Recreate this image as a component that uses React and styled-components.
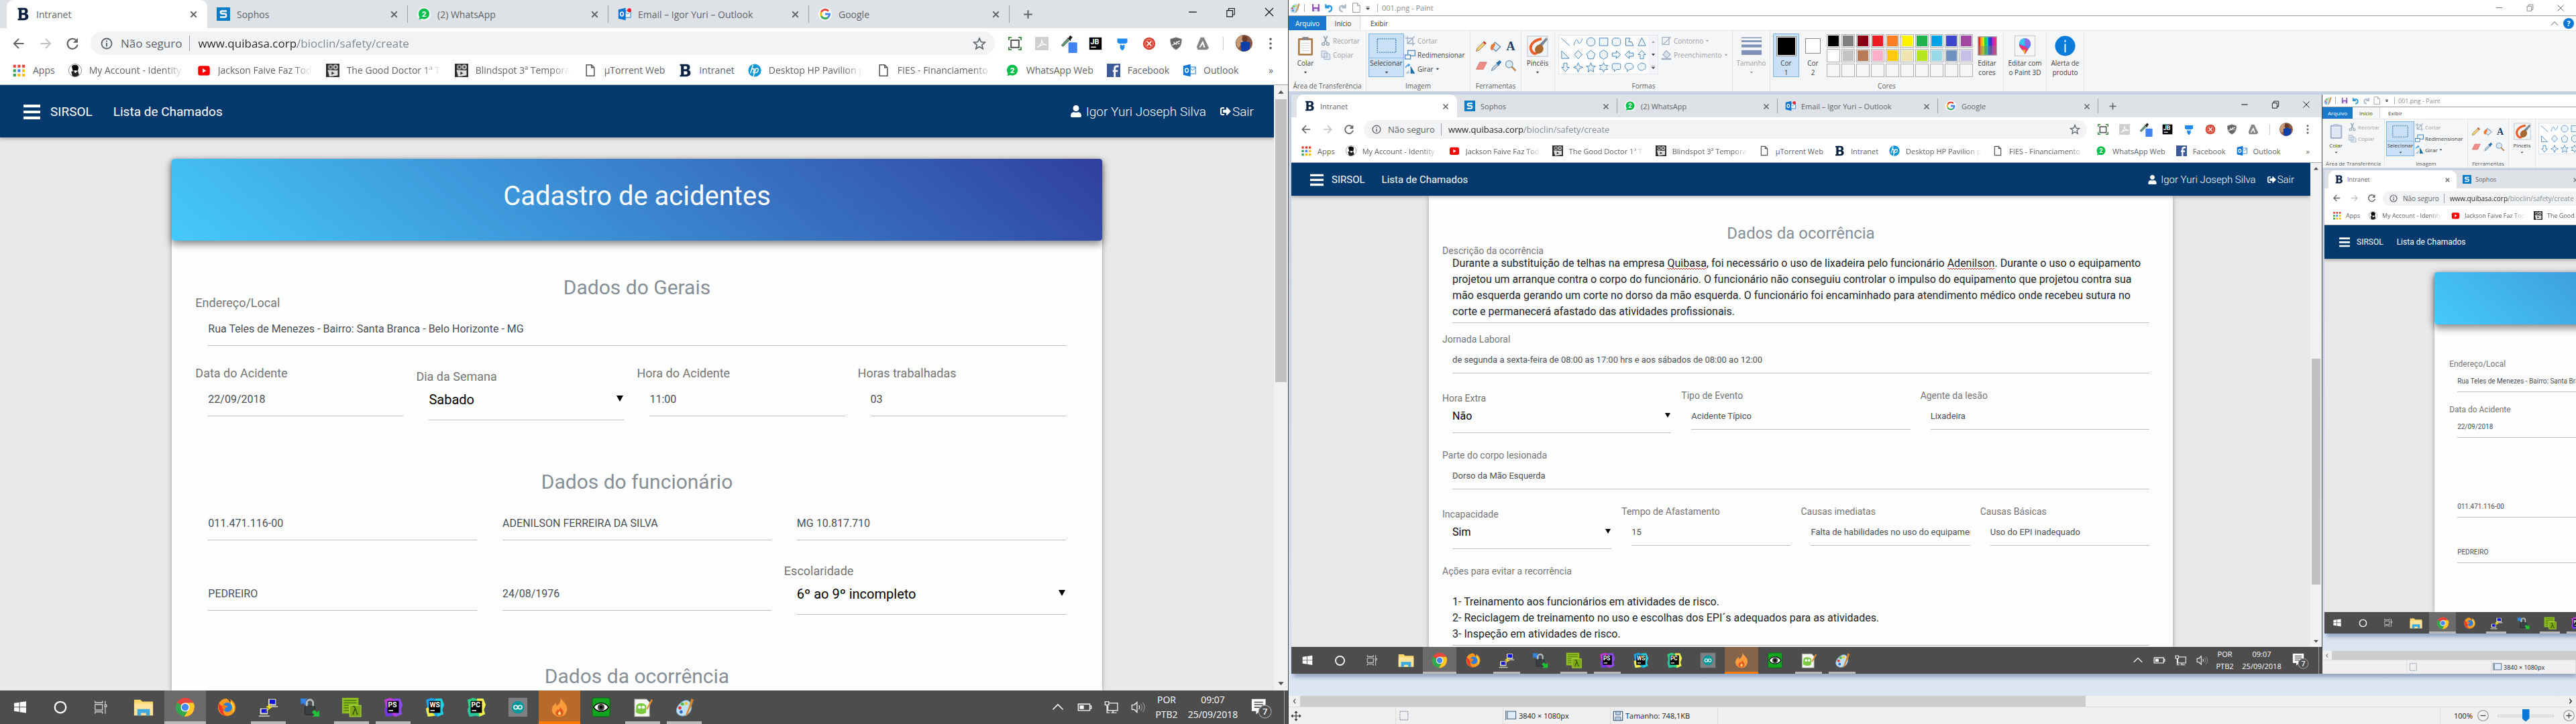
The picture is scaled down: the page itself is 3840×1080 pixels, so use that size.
import React, { useId } from "react";
import styled, { createGlobalStyle, css, ThemeProvider } from "styled-components";
import { FaUser, FaSignOutAlt } from "react-icons/fa";

/* Every length is a base size multiplied by the zoom of the surface it sits on. */
const px = (n) => ({ theme }) => `${Math.max(1, Math.round(n * theme.k))}px`;
/* Sizes that do not scale evenly are listed for the full, reduced and smallest surface. */
const bySurface = (...values) => ({ theme }) => values[theme.level];

const UI = `"Open Sans", "Noto Sans", sans-serif`;
const PAGE = `Roboto, sans-serif`;

const GlobalStyle = createGlobalStyle`
  * { box-sizing: border-box; }
  body { margin: 0; overflow: hidden; font-family: ${UI}; }
  button, input, select, textarea { font: inherit; color: inherit; margin: 0; padding: 0; border: 0; background: none; outline: 0; border-radius: 0; }
  a { color: inherit; text-decoration: none; }
  svg { display: block; flex: none; }
`;

/* ------------------------------------------------------------------ icons */

const Svg = styled.svg`
  width: ${({ $w, theme }) => Math.round($w * theme.k)}px;
  height: ${({ $h, theme }) => Math.round($h * theme.k)}px;
`;

const ideTile = (a, b, c, label) => (
  <>
    <path d="M2 4l9-3 6 2 10-1 4 10-3 8 2 7-9 4-8-2-8 2-3-9 2-6z" fill={a} />
    <path d="M17 2l10 0 4 10-3 8 2 7-9 4z" fill={b} />
    <path d="M2 18l3-2 12 13-4 1-8 1z" fill={c} />
    <rect x="7" y="6" width="18" height="19" fill="#000" />
    <text x="8" y="16.500" fontSize="11" fontWeight="700" fontFamily="Roboto, sans-serif" fill="#fff">{label}</text>
    <rect x="9" y="20.500" width="7" height="1.600" fill="#fff" />
  </>
);

const stroke = (d, extra = {}) => <path d={d} fill="none" stroke="currentColor" strokeWidth="2" {...extra} />;

const drawings = {
  bold: <path fillRule="evenodd" d="M3 1h11c5 0 7 2 7 6 0 2-1 4-3 4.500 3 .5 4 2.500 4 5 0 4-3 6.500-8 6.500H3v-3h2V4H3zM10 4.500V10h3c2 0 3-1 3-3s-1-2.500-3-2.500zM10 13.500v6h3.500c2 0 3-1 3-3s-1-3-3-3z" fill="#0a2142" />,
  sophos: <><rect width="24" height="24" fill="#0a7bc6" /><path d="M18 6.500H9.500q-2.500 0-2.500 2.300T9.500 11.500h5q2.500 0 2.500 3t-2.500 3H6" fill="none" stroke="#fff" strokeWidth="3" /></>,
  whats: <><circle cx="12" cy="12" r="12" fill="#fff" /><circle cx="12" cy="11.500" r="9.800" fill="#0bbf4c" /><path d="M3 22l1.500-6 5 4z" fill="#0bbf4c" /><text x="12" y="16.500" textAnchor="middle" fontSize="14" fontWeight="700" fontFamily="Roboto, sans-serif" fill="#fff">2</text></>,
  outlook: <><rect x="12" y="6" width="11" height="12" fill="#fff" stroke="#1a79d0" strokeWidth="1.200" /><path d="M12 7l5.500 5L23 7" fill="none" stroke="#1a79d0" strokeWidth="1.200" /><path d="M1 4l13-3v22L1 20z" fill="#0f76d4" /><ellipse cx="7.300" cy="12" rx="2.800" ry="3.500" fill="none" stroke="#fff" strokeWidth="1.800" /></>,
  outlookNew: <><rect x="12" y="6" width="11" height="12" fill="#fff" stroke="#1a79d0" strokeWidth="1.200" /><path d="M12 7l5.500 5L23 7" fill="none" stroke="#1a79d0" strokeWidth="1.200" /><path d="M1 4l13-3v22L1 20z" fill="#0f76d4" /><ellipse cx="7.300" cy="12" rx="2.800" ry="3.500" fill="none" stroke="#fff" strokeWidth="1.800" /><circle cx="20.500" cy="5" r="3.500" fill="#f2202c" /></>,
  google: <><circle cx="12" cy="12" r="12" fill="#fff" /><path d="M18 6.500A8 8 0 0 0 5 8.400" fill="none" stroke="#ea4335" strokeWidth="3.400" /><path d="M5 8.400a8 8 0 0 0 0 7.200" fill="none" stroke="#fbbc05" strokeWidth="3.400" /><path d="M5 15.600a8 8 0 0 0 12.200 2.500" fill="none" stroke="#34a853" strokeWidth="3.400" /><path d="M12 12h8a8 8 0 0 1-2.800 6.100" fill="none" stroke="#4285f4" strokeWidth="3.400" /></>,
  cross: stroke("M6 6l12 12M18 6L6 18", { strokeWidth: 2.6 }),
  plus: stroke("M12 4v16M4 12h16", { strokeWidth: 2.6 }),
  back: stroke("M21 12H4M12 3.500L3.500 12l8.500 8.500", { strokeWidth: 2.4 }),
  forward: stroke("M3 12h17M12 3.500l8.500 8.500-8.500 8.500", { strokeWidth: 2.4 }),
  reload: <><path d="M19 6.500A9 9 0 1 0 21 14" fill="none" stroke="currentColor" strokeWidth="2.600" /><path d="M21.500 2v8.500H13z" fill="currentColor" /></>,
  info: <><circle cx="12" cy="12" r="10" fill="none" stroke="currentColor" strokeWidth="2.400" /><path d="M12 10.500V18M12 6v2.500" stroke="currentColor" strokeWidth="2.600" /></>,
  star: stroke("M12 2.500l2.800 6.600 7.200.6-5.500 4.700 1.700 7-6.200-3.800-6.200 3.800 1.700-7L2 9.700l7.200-.6z"),
  capture: <><rect x="5" y="6" width="14" height="13" fill="none" stroke="#555" strokeWidth="2.400" /><path d="M1 6V1h5M18 1h5v5M23 18v5h-5M6 23H1v-5" fill="none" stroke="#3b8a3e" strokeWidth="2.400" /></>,
  pdf: <><rect width="24" height="24" fill="#cfcfcf" /><path d="M4 19c5-3 8-9 8-14 0 6 4 10 9 9-6-1-12 1-17 5z" fill="none" stroke="#fff" strokeWidth="1.600" /></>,
  picker: <><path d="M1 19l10-11 3 3L4 21z" fill="#5d9c76" stroke="#333" strokeWidth=".8" /><path d="M10 6l3 .5L16 2l4 3-3 4 0 3z" fill="#1c1c1c" /><rect x="13" y="14" width="15" height="18" rx="1.500" fill="#3f83f3" /></>,
  jet: <><rect x="1" y="1" width="22" height="22" fill="#000" /><text x="3" y="13" fontSize="13" fontWeight="700" fontFamily="Roboto, sans-serif" fill="#fff">JB</text><rect x="4" y="17.500" width="9" height="1.800" fill="#fff" /></>,
  trello: <path d="M3 3h18v7l-3 2H6l-3-2zM8 14h3l1 2 2-2h2v6l-3 4h-2l-3-4z" fill="#1e8bf2" />,
  redtool: <><circle cx="12" cy="12" r="11" fill="#d3402f" /><circle cx="12" cy="12" r="7.500" fill="none" stroke="#f0a59c" strokeWidth="1.200" /><path d="M8 8l8 8M16 8l-8 8" stroke="#fff" strokeWidth="2" /></>,
  shield: <><path d="M12 1l10 3c0 9-2 15-10 19C4 19 2 13 2 4z" fill="#666" stroke="#999" strokeWidth="1" /><path d="M5 15L19 7M8 9l3 5M13 8v6M15.500 12h3" stroke="#fff" strokeWidth="1.600" /></>,
  avira: <><path d="M8 1h6l9 19-4 3H3l-2-5z" fill="#868686" /><path d="M12 7l4.500 12h-3L12 13l-4.500 6h-2z" fill="#fff" /></>,
  avatar: <><circle cx="12" cy="12" r="12" fill="#8a5a44" /><path d="M1 9a12 12 0 0 1 8-8l2 8-7 10a12 12 0 0 1-3-10z" fill="#c99b74" /><circle cx="13" cy="6" r="4" fill="#6a3b2a" /><path d="M7 11l6-2 8 2-1 9a12 12 0 0 1-12 3z" fill="#0c3fa8" /></>,
  dots: <><circle cx="12" cy="4" r="2.200" fill="currentColor" /><circle cx="12" cy="12" r="2.200" fill="currentColor" /><circle cx="12" cy="20" r="2.200" fill="currentColor" /></>,
  apps: <>{["#ea4335", "#ea4335", "#ea4335", "#34a853", "#4285f4", "#fbbc05", "#34a853", "#fbbc05", "#fbbc05"].map((c, i) => <rect key={i} x={2 + (i % 3) * 8} y={2 + Math.floor(i / 3) * 8} width="5" height="5" fill={c} />)}</>,
  account: <><circle cx="12" cy="12" r="11.500" fill="#fff" stroke="#777" /><path d="M6 5c2-4 11-4 12 1l-1 7-5-1-4 1z" fill="#000" /><path d="M5 14l5-1 2 4 5-4 2 7a11 11 0 0 1-12 2z" fill="#222" /></>,
  youtube: <><rect x="1.500" y="4" width="21" height="17" rx="4" fill="#f00" /><path d="M9.500 8.500v8l6.500-4z" fill="#fff" /></>,
  movie: <><rect width="24" height="24" fill="#2e2e2e" /><circle cx="8" cy="6" r="4.500" fill="#999" /><circle cx="8" cy="6" r="1.800" fill="#333" /><circle cx="17" cy="6" r="4.500" fill="#bbb" /><circle cx="17" cy="6" r="1.800" fill="#333" /><path d="M3 11l16 1 2-1v10L6 23z" fill="#ddd" /><path d="M10 14v6l5-3z" fill="#333" /></>,
  file: <path d="M5 2h9l5 5v15H5zM14 2v5h5" fill="none" stroke="#555" strokeWidth="1.800" />,
  hp: <><circle cx="12" cy="12" r="11.500" fill="#0d96d6" /><path d="M9 2L4.500 17M7.500 10c3-2 4-1 3.500 1l-2 6M14 8l-4.500 15M14 9c4-1.500 5 0 4 3.500s-3 4-5.500 3.500" fill="none" stroke="#fff" strokeWidth="1.800" /></>,
  facebook: <><rect width="24" height="24" fill="#3c5a9a" /><path d="M21 4.500h-2.500c-3 0-4.500 1.500-4.500 4V24M10.500 13h9" fill="none" stroke="#fff" strokeWidth="3.400" /></>,
  minimize: stroke("M5 12h14", { strokeWidth: 1.6 }),
  restore: stroke("M4 8h12v13H4zM8 8V3.500h12V17h-4", { strokeWidth: 1.6 }),
  close: stroke("M4 4l16 16M20 4L4 20", { strokeWidth: 1.6 }),
  burger: <path d="M0 2h24v4H0zM0 10.500h24v4H0zM0 19h24v4H0z" fill="currentColor" />,
  arrowUp: <path d="M3 17l9-11 9 11z" fill="currentColor" />,
  arrowDown: <path d="M3 7l9 11 9-11z" fill="currentColor" />,
  chevLeft: stroke("M15 4l-7 8 7 8", { strokeWidth: 3 }),
  chevRight: stroke("M8 4l7 8-7 8", { strokeWidth: 3 }),
  chevUp: stroke("M3 17l9-9 9 9", { strokeWidth: 2 }),
  /* taskbar */
  win: <path d="M3 7l11-1.600V15H3zM15.500 5.200L29 3.200V15H15.500zM3 16.500h11v9.700L3 24.500zM15.500 16.500H29v12L15.500 26.400z" fill="#fff" />,
  cortana: <circle cx="16" cy="16" r="11" fill="none" stroke="#fff" strokeWidth="3" />,
  tasks: <path d="M4 2v4h16V2M4 30v-4h16v4M4 10h16v12H4zM26 2v8M26 16v14M25 11h4v4h-4z" fill="none" stroke="#e8e8e8" strokeWidth="1.600" />,
  explorer: <><path d="M1 4h10l3 3h17v22H1z" fill="#fbd66b" /><path d="M1 10h30v19H1z" fill="#fde49a" /><path d="M6 29V19h20v10h-6v-4h-8v4z" fill="#3fa9e0" /></>,
  chrome: <><circle cx="16" cy="16" r="15" fill="#e8453c" /><path d="M16 16L3 8.500A15 15 0 0 0 14.500 31L22 19z" fill="#2fa84f" /><path d="M16 16h14.500A15 15 0 0 1 14.500 31L22 19z" fill="#fdc927" /><path d="M16 9h13.200A15 15 0 0 1 31 16l-9 3z" fill="#fdc927" /><circle cx="16" cy="16" r="7" fill="#fff" /><circle cx="16" cy="16" r="5.600" fill="#4688f1" /></>,
  firefox: <><path d="M16 2a14 14 0 1 0 14 15c0-6-3-11-9-14 2 3 2 5 1 7-2-4-3-6-6-8z" fill="#ff9a1f" /><path d="M3 9c-2 12 5 22 15 21C9 29 9 20 12 15c-3 0-6-2-9-6z" fill="#f0382b" /><circle cx="17" cy="16" r="7.500" fill="#2b7de0" /><path d="M8 13c4-2 8 0 10 3-3-1-5 1-4 4-4 0-6-3-6-7z" fill="#ff7d12" /><path d="M22 6c6 5 8 13 3 19 2-8 0-12-3-15z" fill="#ffdc3e" /></>,
  putty: <><rect x="15" y="2" width="14" height="12" fill="#d7d7c8" stroke="#222" /><rect x="18" y="4" width="9" height="7" fill="#1010d8" /><rect x="2" y="17" width="14" height="11" fill="#d7d7c8" stroke="#222" /><rect x="5" y="19" width="9" height="6" fill="#1010d8" /><path d="M1 29h17v2H1zM14 14h17v2H14z" fill="#c9c9b8" /><path d="M22 9l-10 7 5 1-7 7 12-8-5-1z" fill="#ffe600" /></>,
  winscp: <><path d="M1 2h11l-3 3 5 5-4 4-5-5-3 3z" fill="#2f86e8" /><rect x="8" y="14" width="16" height="14" rx="2" fill="#3a3f44" stroke="#222" /><path d="M11 14V9a5 5 0 0 1 10 0v5" fill="none" stroke="#b4bcc0" strokeWidth="3" /><path d="M31 31H20l3-3-4-4 4-4 4 4 4-3z" fill="#1fc437" /></>,
  lambda: <><rect x="1" y="1" width="26" height="25" fill="#8fbf1f" /><path d="M4 5h20M4 9h20M4 13h8M4 17h8M4 21h8" stroke="#4f7a10" strokeWidth="1.500" /><rect x="13" y="13" width="18" height="18" fill="#7da818" stroke="#b6de4a" /><text x="22" y="28" textAnchor="middle" fontSize="17" fontFamily="Open Sans, sans-serif" fill="#26410a">λ</text></>,
  ps: ideTile("#c13bd8", "#8a4cf0", "#7038e0", "PS"),
  ws: ideTile("#1fa3e8", "#22d0e0", "#f4e84a", "WS"),
  pc: ideTile("#2bd18a", "#f6ee4e", "#27c4a0", "PC"),
  arduino: <><rect x="1" y="1" width="30" height="30" fill="#7c8083" /><circle cx="16" cy="16" r="10" fill="#00979c" /><circle cx="12.500" cy="16" r="3" fill="none" stroke="#fff" strokeWidth="1.500" /><circle cx="19.500" cy="16" r="3" fill="none" stroke="#fff" strokeWidth="1.500" /></>,
  flame: <><path d="M18 1c2 6 11 9 10 19-1 8-7 11-12 11S4 27 4 20c0-6 4-8 6-11 1 2 1 4 1 5 5-3 7-7 7-13z" fill="#fb9c3c" /><path d="M17 15c1 4 6 5 5 10-1 4-3 5-6 5s-7-2-6-6c1-3 3-3 3-5 1 1 1 1 2 2 1-2 2-3 2-6z" fill="#e2571c" /><path d="M16 22c2 2 3 3 2 6-4 1-5-1-4-3z" fill="#ffd27a" /></>,
  eye: <><rect x="2" y="1" width="28" height="30" rx="3" fill="#13a51f" stroke="#0a5d12" /><path d="M4 16c6-9 18-9 24 0-6 9-18 9-24 0z" fill="#fff" stroke="#000" strokeWidth="1.600" /><circle cx="16" cy="16" r="5.500" fill="#444" /><circle cx="16" cy="16" r="2.500" fill="#000" /></>,
  notepad: <><path d="M3 3h19l5 5v23H3z" fill="#f4f7f0" stroke="#8a8a8a" /><path d="M6 13c4-5 12-4 16 1l-1 11c-6 3-12 2-16-1z" fill="#7bc843" /><circle cx="11" cy="16" r="2.500" fill="#fff" /><circle cx="17" cy="16" r="2.500" fill="#fff" /><path d="M30 3l2 2-8 14-2 1 .5-3z" fill="#e8912a" /></>,
  palette: <><path d="M25 8c6 8 1 21-11 22-8 0-12-6-10-12S14 4 20 5c2 0 4 1 5 3z" fill="#bfe0f2" stroke="#6fa7c7" /><circle cx="9" cy="17" r="2.600" fill="#e2382d" /><circle cx="13" cy="11" r="2.600" fill="#52b843" /><circle cx="19" cy="10" r="2.400" fill="#f6c927" /><circle cx="11" cy="23.500" r="2.600" fill="#2b68c8" /><path d="M27 2l4 2-2 6-9 20-2-1 7-19z" fill="#d7842d" /></>,
  up: stroke("M5 21L16 10l11 11", { strokeWidth: 2.2, stroke: "#fff" }),
  battery: <><path d="M2 9h25v14H2zM27 13h3v6h-3" fill="none" stroke="#fff" strokeWidth="2" /><rect x="5" y="12" width="9" height="8" fill="#fff" /></>,
  network: <><path d="M11 7h18v16H8V13M15 28h12M19 23v5" fill="none" stroke="#fff" strokeWidth="1.800" /><path d="M2 4h8v7H2zM6 11v17h6" fill="none" stroke="#fff" strokeWidth="1.800" /></>,
  sound: <><path d="M2 11h5l6-6v22l-6-6H2z" fill="none" stroke="#fff" strokeWidth="1.800" /><path d="M17 12c2 2 2 6 0 8" fill="none" stroke="#fff" strokeWidth="1.800" /><path d="M21 9c4 4 4 10 0 14M25 6c6 5 6 15 0 20" fill="none" stroke="#999" strokeWidth="1.600" /></>,
  notice: <><path d="M2 4h22v19h-9l-6 5v-5H2z" fill="#fff" /><path d="M6 9h14M6 13h14M6 17h9" stroke="#4d4d4d" strokeWidth="1.800" /><circle cx="23" cy="24" r="10" fill="#4d4d4d" stroke="#999" strokeWidth="1.400" /><text x="23" y="29" textAnchor="middle" fontSize="14" fontWeight="600" fontFamily="Open Sans, sans-serif" fill="#fff">7</text></>,
  /* paint */
  save: <><path d="M2 2h20v20H2z" fill="#8a52b8" /><path d="M6 2h12v9H6z" fill="#fff" /><path d="M7 15h10v7H7z" fill="#e6dcf0" /></>,
  undo: <path d="M4 2v9h9M5 10c6-6 14-4 14 3 0 5-3 8-8 8" fill="none" stroke="#2e97d8" strokeWidth="4" />,
  redo: <path d="M20 2v9h-9M19 10C13 4 5 6 5 13c0 5 3 8 8 8" fill="none" stroke="#a9bacb" strokeWidth="4" />,
  page: <path d="M4 1h11l6 6v16H4zM15 1v6h6" fill="#fff" stroke="#8a8a8a" strokeWidth="1.400" />,
  caretBar: <path d="M6 7h12M6 12h12l-6 6z" fill="currentColor" stroke="currentColor" strokeWidth="1.600" />,
  scissors: <><path d="M8 1l7 15M16 1L9 16" stroke="#8fa0b5" strokeWidth="2.400" fill="none" /><circle cx="7" cy="19" r="3" fill="none" stroke="#8fa0b5" strokeWidth="2" /><circle cx="17" cy="19" r="3" fill="none" stroke="#8fa0b5" strokeWidth="2" /></>,
  copy: <path d="M3 3h9l3 3v11H3zM9 8h9l4 4v10H9z" fill="#dfe7f1" stroke="#9fb0c6" strokeWidth="1.500" />,
  crop: <path d="M6 1v17h17M1 6h17v17M6 18L22 2" fill="none" stroke="#9fb0c6" strokeWidth="2" />,
  resize: <><rect x="7" y="2" width="16" height="12" fill="#eef5fb" stroke="#3f82bd" strokeWidth="1.800" /><rect x="1" y="12" width="12" height="9" fill="#fff" stroke="#3f82bd" strokeWidth="1.800" /></>,
  rotate: <><path d="M13 22V5l10 17z" fill="#1d6fa8" /><path d="M1 22l9-8v8z" fill="#b5c3ce" /><path d="M2 9c1-4 4-6 8-6M7 0l4 3-4 3" fill="none" stroke="#3f9ae0" strokeWidth="2" /></>,
  pencil: <><path d="M2 22l2-6L18 2l4 4L8 20z" fill="#f2cf7c" stroke="#8a6a32" /><path d="M18 2l4 4-2.500 2.500-4-4z" fill="#c94b3f" /></>,
  bucket: <><path d="M10 4l11 9-9 9-9-8z" fill="#dbe9f4" stroke="#5f7f9c" strokeWidth="1.500" /><path d="M1 14c1-6 6-9 10-6l-6 12c-3 0-4-2-4-6z" fill="#e87a3c" /></>,
  letter: <text x="12" y="20" textAnchor="middle" fontSize="24" fontWeight="700" fontFamily="Liberation Serif, serif" fill="#1c3f63">A</text>,
  eraser: <path d="M9 5h14l-7 14H2z" fill="#f08d86" stroke="#c9625b" />,
  dropper: <><path d="M3 22l2-6 8-7 3 3-8 8z" fill="#b9cfe2" stroke="#52718f" /><path d="M12 6l3-1 4-4 4 4-4 4-1 4z" fill="#2c6cae" /></>,
  lens: <><circle cx="9" cy="9" r="7" fill="#dbeefb" stroke="#8aa1b5" strokeWidth="1.800" /><path d="M14 14l8 8" stroke="#b98a52" strokeWidth="3.400" /></>,
  outline: <path d="M3 4h15v16H3zM5 20L22 3" fill="none" stroke="#a3b2c6" strokeWidth="2" />,
  fill: <><path d="M12 2l9 9-8 8-9-8z" fill="#dbe2ec" stroke="#98a8bf" strokeWidth="1.600" /><path d="M1 19h22v4H1z" fill="#a3b2c6" /></>,
  move: stroke("M12 2v20M2 12h20M9 5l3-3 3 3M9 19l3 3 3-3M5 9l-3 3 3 3M19 9l3 3-3 3", { strokeWidth: 1.6 }),
  marquee: <rect x="4" y="3" width="17" height="18" fill="none" stroke="#6b7f99" strokeWidth="1.600" strokeDasharray="2 1.500" />,
  canvas: <><rect x="4" y="3" width="18" height="16" fill="#dfeefa" stroke="#4d6885" strokeWidth="1.600" /><path d="M1 1v20" stroke="#4d6885" strokeWidth="1.600" /></>,
  disk: <><path d="M2 2h20v20H2z" fill="#fff" stroke="#4d6885" strokeWidth="2" /><path d="M7 2h10v8H7zM6 14h12v8H6z" fill="#b8cbe0" stroke="#4d6885" strokeWidth="1.400" /></>,
  clipboard: <><rect x="1" y="3" width="24" height="28" rx="2" fill="#a97c4a" /><rect x="4" y="6" width="18" height="22" fill="#fff" /><path d="M6 11h14M6 15h14M6 19h14M6 23h14" stroke="#c8ccd2" /><rect x="8" y="1" width="10" height="5" fill="#888" /></>,
  clipboardOff: <><rect x="1" y="3" width="24" height="28" rx="2" fill="#a8b4cf" /><rect x="4" y="6" width="18" height="22" fill="#e6ecf6" /><path d="M6 11h14M6 15h14M6 19h14M6 23h14" stroke="#ccd5e4" /><rect x="8" y="1" width="10" height="5" fill="#b9c3d8" /></>,
  selection: <rect x="1" y="1" width="30" height="22" fill="none" stroke="#3f74a8" strokeWidth="1.500" strokeDasharray="2 1.500" />,
  brushes: <><rect x="1" y="1" width="30" height="30" fill="#f2f5f7" stroke="#b9bdc2" /><path d="M22 5C9 7 3 16 7 23s10 3 9-1" fill="none" stroke="#e8602c" strokeWidth="4" /><path d="M29 3l2 3-10 12-4-3z" fill="#7a8894" /><ellipse cx="18.500" cy="20" rx="6" ry="7" fill="#a8682f" transform="rotate(35 18 20)" /></>,
  sizes: <g stroke="#7d90b5"><path d="M0 2.500h32" strokeWidth="1.500" /><path d="M0 8h32" strokeWidth="3" /><path d="M0 15.500h32" strokeWidth="4.500" /><path d="M0 26h32" strokeWidth="7.500" /></g>,
  spectrum: <><rect width="30" height="30" fill="#a9a9a9" />{["#ff2020", "#ffb000", "#c8f000", "#20d040", "#10c8c8", "#1050e0", "#5020d0", "#c020c0", "#f02080"].map((c, i) => <rect key={c} x={1.5 + i * 3} y="1.500" width="3" height="27" fill={c} />)}<rect x="1.500" y="15" width="27" height="13.500" fill="#808080" opacity=".45" /></>,
  paint3d: <><rect x=".5" y=".5" width="31" height="31" fill="#f6f7f8" stroke="#c2c5c9" /><path d="M16 29c-2-7-9-9-9-16a9 9 0 0 1 18 0c0 7-7 9-9 16z" fill="#5a7cf0" /><path d="M7 13a9 9 0 0 1 9-9v12z" fill="#36c5ee" /><path d="M16 29c-2-7-8-9-9-15l9 3 5 4z" fill="#f0356c" /><path d="M16 29c-1-3-3-5-4-7l5 0z" fill="#f8b02c" /><path d="M16 4a9 9 0 0 1 9 9l-9 4z" fill="#8f6be8" /></>,
  alert: <><circle cx="16" cy="16" r="15.500" fill="#0a7bd8" /><path d="M16 13v13M16 7v3" stroke="#fff" strokeWidth="2" /></>,
  help: <><circle cx="12" cy="12" r="12" fill="#0a78d4" /><text x="12" y="17.500" textAnchor="middle" fontSize="16" fontWeight="700" fontFamily="Open Sans, sans-serif" fill="#fff">?</text></>,
  minusRound: <><circle cx="12" cy="12" r="11" fill="#f4f4f4" stroke="#8b8b8b" strokeWidth="1.500" /><path d="M6.500 12h11" stroke="#444" strokeWidth="1.800" /></>,
  plusRound: <><circle cx="12" cy="12" r="11" fill="#f4f4f4" stroke="#8b8b8b" strokeWidth="1.500" /><path d="M6.500 12h11M12 6.500v11" stroke="#444" strokeWidth="1.800" /></>,
};

const boxes32 = new Set(["win", "cortana", "tasks", "explorer", "chrome", "firefox", "putty", "winscp", "lambda", "ps", "ws", "pc", "arduino", "flame", "eye", "notepad", "palette", "up", "battery", "network", "sound", "brushes", "sizes", "paint3d", "alert"]);
const viewBoxes = { picker: "0 0 28 32", clipboard: "0 0 26 32", clipboardOff: "0 0 26 32", selection: "0 0 32 24", spectrum: "0 0 30 30", notice: "0 0 34 35" };

const Icon = ({ name, w, h = w }) => (
  <Svg $w={w} $h={h} viewBox={viewBoxes[name] || (boxes32.has(name) ? "0 0 32 32" : "0 0 24 24")} aria-hidden="true">
    {drawings[name]}
  </Svg>
);

/* ---------------------------------------------------------------- browser */

const Browser = styled.section`
  flex: 1;
  min-height: 0;
  display: flex;
  flex-direction: column;
  background: #fff;
  font-family: ${UI};
  font-size: ${px(14)};
  color: #5f6368;
`;
const TabStrip = styled.div`
  display: flex;
  height: ${px(42)};
  padding-left: ${px(10)};
  background: #dee1e6;
`;
const Tab = styled.div`
  flex: 0 0 ${px(299)};
  display: flex;
  align-items: center;
  gap: ${px(10)};
  padding: 0 ${px(12)} 0 ${px(14)};
  border-right: 1px solid transparent;
  ${({ $active }) => $active
    ? "background: #fff; border-radius: 10px 10px 0 0;"
    : "border-image: linear-gradient(transparent 20%, #9b9ea3 20%, #9b9ea3 80%, transparent 80%) 1;"}
`;
const TabTitle = styled.button`
  flex: 1;
  text-align: left;
  white-space: nowrap;
`;
const FlatButton = styled.button`
  display: grid;
  place-items: center;
  width: ${({ $w, theme }) => Math.round($w * theme.k)}px;
  height: ${({ $h = 36, theme }) => Math.round($h * theme.k)}px;
  color: ${({ $color = "inherit" }) => $color};
`;
const WindowButtons = styled.div`
  display: flex;
  margin-left: auto;
  color: #111;
`;
const Toolbar = styled.div`
  display: flex;
  align-items: center;
  height: ${px(45)};
  padding: 0 ${px(6)} 0 ${px(8)};
`;
const Omnibox = styled.div`
  flex: 1;
  display: flex;
  align-items: center;
  gap: ${px(12)};
  height: ${px(35)};
  margin: 0 ${px(10)} 0 ${px(7)};
  padding: 0 ${px(13)} 0 ${px(15)};
  border-radius: 18px;
  background: #f1f3f4;
  font-size: ${bySurface("17px", "13px", "10px")};
`;
const Security = styled.span`
  padding-right: ${px(11)};
  border-right: 1px solid #9aa0a6;
  white-space: nowrap;
`;
const Address = styled.input`
  flex: 1;
  min-width: 0;
  color: transparent;
  background: linear-gradient(90deg, #202124 8.7em, #80868b 8.7em);
  -webkit-background-clip: text;
  background-clip: text;
`;
const Divider = styled.span`
  width: 1px;
  height: ${px(20)};
  margin: 0 ${px(10)};
  background: #c8cbd0;
`;
const Bookmarks = styled.nav`
  display: flex;
  align-items: center;
  gap: ${px(20)};
  height: ${px(40)};
  padding: 0 ${px(22)} ${px(4)} ${px(18)};
  border-bottom: 1px solid #a9abae;
`;
const Bookmark = styled.a`
  display: flex;
  align-items: center;
  gap: ${px(11)};
  white-space: nowrap;
`;
const BookmarkName = styled.span`
  ${({ $cut }) => $cut && css`
    width: ${px(141)};
    overflow: hidden;
    mask-image: linear-gradient(90deg, #000 80%, transparent);
  `}
`;
const More = styled.button`
  margin-left: auto;
`;
const Viewport = styled.div`
  flex: 1;
  min-height: 0;
  display: flex;
`;
const Page = styled.main`
  flex: 1;
  min-width: 0;
  display: flex;
  flex-direction: column;
  overflow: hidden;
  background: #e8e8e8;
  font-family: ${PAGE};
`;
const Scrollbar = styled.div`
  display: flex;
  flex-direction: column;
  width: ${px(21)};
  padding: 0 2px;
  background: #f1f1f1;
  color: #505050;
`;
const ScrollArrow = styled.button`
  display: grid;
  place-items: center;
  height: ${px(21)};
`;
const ScrollPart = styled.div`
  flex: ${({ $part }) => $part} 0 0;
  background: ${({ $thumb }) => ($thumb ? "#c1c1c1" : "transparent")};
`;

const SiteNav = styled.header`
  position: relative;
  z-index: 1;
  flex: none;
  display: flex;
  align-items: center;
  height: ${({ $slim, theme }) => Math.round(($slim ? 61 : 78) * theme.k)}px;
  padding: 0 ${px(30)} 0 ${px(35)};
  background: #03396c;
  color: #fff;
  font-size: ${px(19)};
  white-space: nowrap;
  box-shadow: 0 2px 5px rgba(0, 0, 0, 0.3);
`;
const Brand = styled.a`
  margin: 0 ${px(31)} 0 ${px(15)};
`;
const Account = styled.div`
  display: flex;
  gap: ${px(21)};
  margin-left: auto;
  font-weight: 300;
`;
const AccountLink = styled.a`
  display: flex;
  align-items: center;
  gap: ${({ $gap, theme }) => Math.round($gap * theme.k)}px;
  & > svg { width: ${px(16)}; height: ${px(18)}; }
`;

const Card = styled.form`
  flex: 1 0 auto;
  display: flex;
  flex-direction: column;
  width: 73%;
  margin: ${({ $scrolled }) => ($scrolled ? "0" : px(32))} auto 0;
  background: #fefefe;
  border-radius: ${({ $scrolled }) => ($scrolled ? "0" : "4px 4px 0 0")};
  box-shadow: 0 2px 5px rgba(0, 0, 0, 0.24), 0 2px 10px rgba(0, 0, 0, 0.12);
`;
const CardHeader = styled.h1`
  min-height: ${px(122)};
  margin: 0;
  padding: ${px(33)} 0 ${px(43)};
  border-radius: 4px;
  background: linear-gradient(40deg, #45cafc, #303f9f);
  box-shadow: 0 5px 11px rgba(0, 0, 0, 0.35), 0 4px 15px rgba(0, 0, 0, 0.2);
  color: #fff;
  font-size: ${px(40)};
  font-weight: 400;
  line-height: ${px(46)};
  text-align: center;
`;
const CardBody = styled.div`
  display: flex;
  flex-direction: column;
  gap: ${px(79)};
  padding: ${px(57)} ${({ $wide, theme }) => Math.round(($wide ? 25 : 35) * theme.k)}px 0;
`;
const Section = styled.section``;
const SectionTitle = styled.h2`
  margin: 0;
  min-height: ${px(26)};
  color: #868e96;
  font-size: ${px(30)};
  font-weight: 400;
  line-height: ${px(26)};
  text-align: center;
`;
const Rows = styled.div`
  display: flex;
  flex-direction: column;
  gap: ${px(31)};
`;
const FieldRow = styled.div`
  display: grid;
  grid-template-columns: repeat(${({ $cols }) => $cols}, 1fr);
  align-items: start;
`;
const FieldBox = styled.div`
  display: flex;
  flex-direction: column;
  padding-top: ${({ $kind, theme }) => Math.round(({ bare: 20, select: 5, area: 10 }[$kind] || 0) * theme.k)}px;
  margin-bottom: ${({ $kind, theme }) => ($kind === "area" ? Math.round(-11 * theme.k) : 0)}px;
`;
const FieldLabel = styled.label`
  color: #757575;
  font-size: ${px(18)};
  line-height: ${({ $tight, theme }) => Math.round(($tight ? 18 : 20) * theme.k)}px;
`;
const control = css`
  min-width: 0;
  margin: ${px(4)} ${px(19)} 0;
  border-bottom: 1px solid #bdbdbd;
`;
const TextInput = styled.input`
  ${control}
  height: ${px(50)};
  color: #495057;
  font-size: ${px(16)};
`;
const SelectBox = styled.div`
  ${control}
  position: relative;
  height: ${px(51)};
  padding-bottom: ${px(11)};
  &::after {
    content: "";
    position: absolute;
    right: 1px;
    top: ${px(14)};
    border: solid transparent;
    border-width: ${px(9)} ${px(5)} 0;
    border-top-color: #000;
  }
`;
const Select = styled.select`
  appearance: none;
  width: 100%;
  height: 100%;
  color: #000;
  font-size: ${px(20)};
`;
const AreaBox = styled.div`
  position: relative;
  display: flex;
  margin: 0 ${px(19)};
  padding-top: ${({ $spaced }) => ($spaced ? px(33) : "0")};
`;
const TextArea = styled.textarea`
  flex: 1;
  display: block;
  height: ${({ rows, theme }) => Math.round((rows * 30 + 6) * theme.k)}px;
  border-bottom: 1px solid #bdbdbd;
  color: #212529;
  font-size: ${px(20)};
  line-height: ${px(30)};
  resize: none;
  overflow: hidden;
`;
const Misspelling = styled.span`
  position: absolute;
  top: ${px(24)};
  left: ${({ $x, theme }) => Math.round($x * theme.k)}px;
  width: ${({ $w, theme }) => Math.round($w * theme.k)}px;
  height: 3px;
  background: repeating-linear-gradient(90deg, #e33 0 2px, transparent 2px 4px) 0 0 / 100% 1px no-repeat,
    repeating-linear-gradient(90deg, transparent 0 2px, #e33 2px 4px) 0 1px / 100% 1px no-repeat;
`;

const Field = ({ label, name, value, kind }) => {
  const id = useId();
  const bare = !label;
  return (
    <FieldBox $kind={kind === "select" ? "select" : bare ? "bare" : ""}>
      {label && <FieldLabel htmlFor={id}>{label}</FieldLabel>}
      {kind === "select" ? (
        <SelectBox><Select id={id} defaultValue={value}><option>{value}</option></Select></SelectBox>
      ) : (
        <TextInput id={id} aria-label={bare ? name : undefined} defaultValue={value} />
      )}
    </FieldBox>
  );
};

const AreaField = ({ label, value, rows, spaced, marks = [] }) => {
  const id = useId();
  return (
    <FieldBox $kind={spaced ? "" : "area"}>
      <FieldLabel htmlFor={id} $tight={!spaced}>{label}</FieldLabel>
      <AreaBox $spaced={spaced}>
        <TextArea id={id} rows={rows} defaultValue={value} spellCheck={false} />
        {marks.map(([x, w]) => <Misspelling key={x} $x={x} $w={w} />)}
      </AreaBox>
    </FieldBox>
  );
};

/* The row's height comes from its select, so the short version keeps room for it. */
const MixedRow = styled(FieldRow)`
  min-height: ${px(80)};
`;

const GeneralForm = ({ cropped }) => (
  <Card>
    <CardHeader>{!cropped && "Cadastro de acidentes"}</CardHeader>
    <CardBody>
      <Section>
        <SectionTitle>{!cropped && "Dados do Gerais"}</SectionTitle>
        <Rows>
          <FieldRow $cols={1}>
            <Field label="Endereço/Local" value="Rua Teles de Menezes - Bairro: Santa Branca - Belo Horizonte - MG" />
          </FieldRow>
          <MixedRow $cols={4}>
            <Field label="Data do Acidente" value="22/09/2018" />
            {!cropped && <Field label="Dia da Semana" value="Sabado" kind="select" />}
            {!cropped && <Field label="Hora do Acidente" value="11:00" />}
            {!cropped && <Field label="Horas trabalhadas" value="03" />}
          </MixedRow>
        </Rows>
      </Section>
      <Section>
        <SectionTitle>{!cropped && "Dados do funcionário"}</SectionTitle>
        <Rows>
          <FieldRow $cols={3}>
            <Field name="CPF" value="011.471.116-00" />
            {!cropped && <Field name="Nome" value="ADENILSON FERREIRA DA SILVA" />}
            {!cropped && <Field name="RG" value="MG 10.817.710" />}
          </FieldRow>
          <MixedRow $cols={3}>
            <Field name="Cargo" value="PEDREIRO" />
            {!cropped && <Field name="Nascimento" value="24/08/1976" />}
            {!cropped && <Field label="Escolaridade" value="6º ao 9º incompleto" kind="select" />}
          </MixedRow>
        </Rows>
      </Section>
      {!cropped && <SectionTitle>Dados da ocorrência</SectionTitle>}
    </CardBody>
  </Card>
);

const OccurrenceForm = () => (
  <Card $scrolled>
    <CardBody $wide>
      <Section>
        <SectionTitle>Dados da ocorrência</SectionTitle>
        <Rows>
          <FieldRow $cols={1}>
            <AreaField
              label="Descrição da ocorrência"
              rows={4}
              marks={[[400, 73], [922, 87]]}
              value="Durante a substituição de telhas na empresa Quibasa, foi necessário o uso de lixadeira pelo funcionário Adenilson. Durante o uso o equipamento projetou um arranque contra o corpo do funcionário. O funcionário não conseguiu controlar o impulso do equipamento que projetou contra sua mão esquerda gerando um corte no dorso da mão esquerda. O funcionário foi encaminhado para atendimento médico onde recebeu sutura no corte e permanecerá afastado das atividades profissionais."
            />
          </FieldRow>
          <FieldRow $cols={1}>
            <Field label="Jornada Laboral" value="de segunda a sexta-feira de 08:00 as 17:00 hrs e aos sábados de 08:00 ao 12:00" />
          </FieldRow>
          <FieldRow $cols={3}>
            <Field label="Hora Extra" value="Não" kind="select" />
            <Field label="Tipo de Evento" value="Acidente Típico" />
            <Field label="Agente da lesão" value="Lixadeira" />
          </FieldRow>
          <FieldRow $cols={1}>
            <Field label="Parte do corpo lesionada" value="Dorso da Mão Esquerda" />
          </FieldRow>
          <FieldRow $cols={4}>
            <Field label="Incapacidade" value="Sim" kind="select" />
            <Field label="Tempo de Afastamento" value="15" />
            <Field label="Causas imediatas" value="Falta de habilidades no uso do equipamento" />
            <Field label="Causas Básicas" value="Uso do EPI inadequado" />
          </FieldRow>
          <FieldRow $cols={1}>
            <AreaField
              label="Ações para evitar a recorrência"
              rows={3}
              spaced
              value={"1- Treinamento aos funcionários em atividades de risco.\n2- Reciclagem de treinamento no uso e escolhas dos EPI´s adequados para as atividades.\n3- Inspeção em atividades de risco."}
            />
          </FieldRow>
        </Rows>
      </Section>
    </CardBody>
  </Card>
);

const tabs = [
  ["bold", "Intranet"], ["sophos", "Sophos"], ["whats", "(2) WhatsApp"], ["outlookNew", "Email – Igor Yuri – Outlook"], ["google", "Google"],
];
const bookmarks = [
  ["apps", "Apps"], ["account", "My Account - Identity", true], ["youtube", "Jackson Faive Faz Tod", true], ["movie", "The Good Doctor 1ª T", true],
  ["movie", "Blindspot 3ª Tempora", true], ["file", "µTorrent Web"], ["bold", "Intranet"], ["hp", "Desktop HP Pavilion p", true],
  ["file", "FIES - Financiamento", true], ["whats", "WhatsApp Web"], ["facebook", "Facebook"], ["outlook", "Outlook"],
];
const extensions = ["capture", "pdf", "picker", "jet", "trello", "redtool", "shield", "avira"];

const BrowserWindow = ({ cropped, scrolled }) => (
  <Browser>
    <TabStrip>
      {tabs.slice(0, cropped ? 2 : 5).map(([icon, title], i) => (
        <Tab key={title} $active={i === 0}>
          <Icon name={icon} w={20} />
          <TabTitle>{title}</TabTitle>
          <FlatButton $w={16} $h={16} aria-label="Fechar guia"><Icon name="cross" w={17} /></FlatButton>
        </Tab>
      ))}
      {!cropped && <FlatButton $w={54} $h={42} aria-label="Nova guia"><Icon name="plus" w={19} /></FlatButton>}
      {!cropped && (
        <WindowButtons>
          <FlatButton $w={57} aria-label="Minimizar"><Icon name="minimize" w={20} /></FlatButton>
          <FlatButton $w={57} aria-label="Restaurar"><Icon name="restore" w={17} /></FlatButton>
          <FlatButton $w={57} aria-label="Fechar"><Icon name="close" w={18} /></FlatButton>
        </WindowButtons>
      )}
    </TabStrip>
    <Toolbar>
      <FlatButton $w={40} aria-label="Voltar"><Icon name="back" w={20} /></FlatButton>
      <FlatButton $w={40} $color="#bdc1c6" aria-label="Avançar"><Icon name="forward" w={20} /></FlatButton>
      <FlatButton $w={40} aria-label="Atualizar"><Icon name="reload" w={20} /></FlatButton>
      <Omnibox>
        <Icon name="info" w={18} />
        <Security>Não seguro</Security>
        <Address aria-label="Endereço" defaultValue="www.quibasa.corp/bioclin/safety/create" />
        {!cropped && <Icon name="star" w={20} />}
      </Omnibox>
      {!cropped && (
        <>
          {extensions.map((name) => (
            <FlatButton key={name} $w={40} aria-label={name}>
              <Icon name={name} w={name === "picker" ? 25 : 20} h={name === "picker" ? 28 : 20} />
            </FlatButton>
          ))}
          <Divider />
          <FlatButton $w={40} aria-label="Perfil"><Icon name="avatar" w={25} /></FlatButton>
          <FlatButton $w={40} aria-label="Menu"><Icon name="dots" w={20} /></FlatButton>
        </>
      )}
    </Toolbar>
    <Bookmarks>
      {bookmarks.slice(0, cropped ? 4 : 12).map(([icon, name, cut], i) => (
        <Bookmark href="#" key={i}>
          <Icon name={icon} w={20} />
          <BookmarkName $cut={cut}>{name}</BookmarkName>
        </Bookmark>
      ))}
      {!cropped && <More aria-label="Mais favoritos">»</More>}
    </Bookmarks>
    <Viewport>
      <Page>
        <SiteNav $slim={scrolled}>
          <Icon name="burger" w={25} />
          <Brand href="#">SIRSOL</Brand>
          <a href="#">Lista de Chamados</a>
          {!cropped && (
            <Account>
              <AccountLink href="#" $gap={7}><FaUser />Igor Yuri Joseph Silva</AccountLink>
              <AccountLink href="#" $gap={2}><FaSignOutAlt />Sair</AccountLink>
            </Account>
          )}
        </SiteNav>
        {scrolled ? <OccurrenceForm /> : <GeneralForm cropped={cropped} />}
      </Page>
      <Scrollbar>
        <ScrollArrow aria-label="Rolar para cima"><Icon name="arrowUp" w={11} /></ScrollArrow>
        <ScrollPart $part={scrolled ? 40 : 0} />
        <ScrollPart $part={49} $thumb />
        <ScrollPart $part={scrolled ? 11 : 51} />
        <ScrollArrow aria-label="Rolar para baixo"><Icon name="arrowDown" w={11} /></ScrollArrow>
      </Scrollbar>
    </Viewport>
  </Browser>
);

/* ---------------------------------------------------------------- taskbar */

const Bar = styled.footer`
  flex: none;
  display: flex;
  height: ${px(50)};
  background: #4d4d4d;
  color: #fff;
  font-family: ${UI};
  font-size: ${px(14)};
`;
const AppButton = styled.button`
  position: relative;
  display: grid;
  place-items: center;
  width: ${({ $w, theme }) => Math.round($w * theme.k)}px;
  background: transparent;
  ${({ $state }) => $state === "front" && "background: #6b6b6b;"}
  ${({ $state }) => $state === "alert" && css`background: ${bySurface("#b86a2b", "#86644a", "#86644a")};`}
  &::after {
    content: "";
    position: absolute;
    inset: auto ${({ $state }) => ($state === "open" ? "5px" : "0")} 0;
    height: ${px(4)};
    background: ${({ $state }) => ({ open: "#b9b9b9", front: "#b9b9b9", alert: "#ff7800" }[$state] || "transparent")};
  }
`;
const Launchers = styled.div`
  display: flex;
  margin-left: ${px(3)};
`;
const Tray = styled.div`
  display: flex;
  align-items: center;
  margin-left: auto;
  padding-right: ${px(9)};
  border-right: 1px solid #9a9a9a;
  margin-right: ${px(5)};
`;
const TrayText = styled.div`
  width: ${({ $w, theme }) => Math.round($w * theme.k)}px;
  line-height: ${px(22)};
  text-align: center;
  white-space: nowrap;
`;

const launchers = [
  ["explorer"], ["chrome", "front"], ["firefox"], ["putty", "open"], ["winscp"], ["lambda", "open"], ["ps", "open"], ["ws"], ["pc"],
  ["arduino"], ["flame", "alert"], ["eye"], ["notepad", "open"], ["palette", "open"],
];

const Taskbar = ({ cropped }) => (
  <Bar>
    <AppButton $w={60} aria-label="Iniciar"><Icon name="win" w={22} /></AppButton>
    <AppButton $w={60} aria-label="Cortana"><Icon name="cortana" w={24} /></AppButton>
    <AppButton $w={60} aria-label="Visão de tarefas"><Icon name="tasks" w={22} /></AppButton>
    <Launchers>
      {launchers.slice(0, cropped ? 7 : 14).map(([name, state]) => (
        <AppButton key={name} $w={62} $state={state} aria-label={name}><Icon name={name} w={30} /></AppButton>
      ))}
    </Launchers>
    {!cropped && (
      <Tray>
        <FlatButton $w={40} aria-label="Ícones ocultos"><Icon name="up" w={22} /></FlatButton>
        <FlatButton $w={40} aria-label="Bateria"><Icon name="battery" w={22} /></FlatButton>
        <FlatButton $w={40} aria-label="Rede"><Icon name="network" w={22} /></FlatButton>
        <FlatButton $w={40} aria-label="Som"><Icon name="sound" w={22} /></FlatButton>
        <TrayText $w={44}><div>POR</div><div>PTB2</div></TrayText>
        <TrayText $w={94}><div>09:07</div><div>25/09/2018</div></TrayText>
        <FlatButton $w={50} $h={50} aria-label="Notificações"><Icon name="notice" w={32} h={33} /></FlatButton>
      </Tray>
    )}
  </Bar>
);

/* ------------------------------------------------------------------ paint */

const PaintWindow = styled.section`
  flex: 1;
  min-width: 0;
  display: flex;
  flex-direction: column;
  border-left: 1px solid #444;
  background: #fff;
  color: #3c3c3c;
  font-family: ${UI};
  font-size: ${px(10)};
  overflow: hidden;
`;
const TitleBar = styled.header`
  flex: none;
  display: flex;
  align-items: center;
  gap: ${px(6)};
  height: ${px(24)};
  padding-left: 1px;
  border-bottom: 1px solid #999;
  color: #8d8d8d;
  font-size: ${px(11)};
`;
const QuickAccess = styled.div`
  display: flex;
`;
const TitleMark = styled.span`
  width: 1px;
  height: ${px(12)};
  background: #aaa;
`;
const RibbonTabs = styled.div`
  flex: none;
  display: flex;
  height: ${px(22)};
  border-bottom: 1px solid #e4e5e7;
`;
const RibbonTab = styled.button`
  width: ${({ $w, theme }) => Math.round($w * theme.k)}px;
  ${({ $kind }) => $kind === "file" && "background: #1979ca; color: #fff;"}
  ${({ $kind }) => $kind === "current" && "background: #f5f6f7; border-right: 1px solid #dadbdc;"}
`;
const RibbonHelp = styled.div`
  display: flex;
  align-items: center;
  gap: ${px(6)};
  margin-left: auto;
  padding-right: 3px;
  color: #999;
`;
const Ribbon = styled.div`
  flex: none;
  display: flex;
  height: ${px(91)};
  border-bottom: 1px solid #d5d8dc;
  background: #f5f6f7;
`;
const Group = styled.div`
  flex: none;
  display: flex;
  flex-direction: column;
  width: ${({ $w, theme }) => Math.round($w * theme.k)}px;
  padding-top: ${px(4)};
  border-right: 1px solid #e2e3e5;
`;
const GroupBody = styled.div`
  display: flex;
  justify-content: ${({ $center }) => ($center ? "center" : "flex-start")};
  height: ${px(71)};
  padding-left: ${({ $pad = 0, theme }) => Math.round($pad * theme.k)}px;
`;
const GroupName = styled.div`
  line-height: ${px(14)};
  text-align: center;
  color: #5c5c5c;
  white-space: nowrap;
`;
const BigButton = styled.button`
  display: flex;
  flex-direction: column;
  align-items: center;
  width: ${({ $w, theme }) => Math.round($w * theme.k)}px;
  height: ${px(65)};
  line-height: ${px(14)};
  white-space: nowrap;
  color: ${({ $off }) => ($off ? "#a0a0a0" : "inherit")};
  ${({ $on }) => $on && "background: #c9e0f7; box-shadow: inset 0 0 0 1px #7db2e8;"}
  & > span { display: grid; place-items: center; height: ${px(14)}; }
`;
const BigIcon = styled.i`
  display: grid;
  place-items: center;
  align-self: stretch;
  height: ${px(37)};
  border-bottom: ${({ $split }) => ($split ? "1px solid #8dbdec" : "0")};
`;
const Stack = styled.div`
  display: flex;
  flex-direction: column;
`;
const SmallButton = styled.button`
  display: flex;
  align-items: center;
  gap: ${px(3)};
  height: ${px(21)};
  padding-left: 1px;
  white-space: nowrap;
  color: ${({ $off }) => ($off ? "#a0a0a0" : "inherit")};
`;
const ToolGrid = styled.div`
  display: grid;
  grid-template: repeat(2, ${px(29)}) / repeat(3, ${px(22)});
  padding-top: ${px(4)};
`;
const Gallery = styled.div`
  display: flex;
  height: ${px(59)};
  margin: ${px(2)} ${px(3)} 0 0;
  border: 1px solid #e2e5ea;
  background: #fdfdfe;
`;
const ShapeGrid = styled.div`
  display: grid;
  grid-template: repeat(3, ${px(19)}) / repeat(7, ${px(19)});
`;
const GalleryScroll = styled.div`
  display: grid;
  width: ${px(14)};
  background: #f2f4f7;
`;
const Swatch = styled.span`
  width: ${({ $s, theme }) => Math.round($s * theme.k)}px;
  height: ${({ $s, theme }) => Math.round($s * theme.k)}px;
  border: 1px solid #8a8a8a;
  outline: 1px solid #fff;
  outline-offset: -2px;
  background: ${({ $c }) => $c};
`;
const Colors = styled.div`
  display: grid;
  grid-template-columns: repeat(10, ${px(20)});
  grid-auto-rows: ${px(20)};
  gap: ${px(2)};
  margin-top: 1px;
`;
const ColorCell = styled.button`
  border: 1px solid #b0b0b0;
  padding: 1px;
  background: ${({ $c }) => $c} content-box;
`;
const Workspace = styled.div`
  flex: 1;
  min-height: 0;
  display: flex;
  align-items: flex-start;
  padding: ${px(4)} 0 0 ${px(4)};
  background: linear-gradient(#c6d1e3, #dce6f3);
`;
const Snapshot = styled.div`
  flex: none;
  display: flex;
  width: ${({ $w }) => $w};
  height: ${({ $h }) => $h};
  box-shadow: 2px 6px 6px -1px rgba(100, 120, 160, 0.6);
`;
const Screen = styled.div`
  flex: 0 0 ${({ $w }) => $w};
  display: flex;
  flex-direction: column;
  min-width: 0;
  overflow: hidden;
`;
const HScroll = styled.div`
  flex: none;
  display: flex;
  height: ${px(16)};
  background: #f0f0f0;
  color: #505050;
`;
const HThumb = styled.div`
  width: ${({ $full }) => ($full ? "100%" : "61%")};
  background: #cdcdcd;
`;
const Status = styled.footer`
  flex: none;
  display: flex;
  height: ${px(26)};
  border-top: 1px solid #dcdcdc;
  background: #f0f0f0;
  color: #222;
  font-size: ${px(11)};
`;
const StatusCell = styled.div`
  display: flex;
  align-items: center;
  gap: ${px(3)};
  width: ${px(160)};
  padding-left: ${px(3)};
  border-right: 1px solid #dcdcdc;
  white-space: nowrap;
`;
const ZoomCell = styled.div`
  display: flex;
  align-items: center;
  gap: ${px(6)};
  margin-left: auto;
  padding: 0 2px 0 ${px(20)};
  border-left: 1px solid #dcdcdc;
`;
const ZoomRange = styled.input`
  appearance: none;
  width: ${px(98)};
  height: ${px(20)};
  padding: 0 ${px(7)};
  &::-webkit-slider-runnable-track { height: 4px; border: 1px solid #d0d4d4; background: #e6eaea; }
  &::-webkit-slider-thumb {
    appearance: none;
    width: 11px;
    height: 19px;
    margin-top: -9px;
    background: #0a78d7;
    clip-path: polygon(0 0, 100% 0, 100% 75%, 50% 100%, 0 75%);
  }
`;

const shapePaths = [
  "M2 3l20 18", "M2 20C7 0 11 8 12 12s5 8 10-8", "M12 2a10 10 0 1 0 .1 0z", "M2 3h20v18H2z", "M6 3h12l4 4v10l-4 4H6l-4-4V7z", "M4 21V3h10l-3 9h7l4 9z", "M12 2l9 19H3z",
  "M3 3v18h18z", "M12 2l9 10-9 10L3 12z", "M12 2l10 8-4 12H6L2 10z", "M12 1l9 6v10l-9 6-9-6V7z", "M2 8h10V3l10 9-10 9v-5H2z", "M22 8H12V3L2 12l10 9v-5h10z", "M8 22V12H3l9-10 9 10h-5v10z",
  "M8 2v10H3l9 10 9-10h-5V2z", "M12 1l3 8 8 3-8 3-3 8-3-8-8-3 8-3z", "M12 1l3 8h8l-6 5 2 9-7-5-7 5 2-9-6-5h8z", "M12 1l3 6h7l-4 5 4 5h-7l-3 6-3-6H2l4-5-4-5h7z", "M4 3h16l2 2v10l-2 2H12l-5 5v-5H4l-2-2V5z", "M12 2c13 0 13 15 1 15l-6 5 1-5C-2 13 1 2 12 2z", "M8 3c4-3 6 0 8 0 6 0 4 5 5 7 2 6-4 6-6 8s-5 1-7 0c-5 0-4-5-5-6-3-5 2-6 5-9z",
];
const Shape = styled.svg`
  width: ${px(17)};
  height: ${px(15)};
  margin: auto;
`;
const palette = [
  "#000000", "#7f7f7f", "#880015", "#ed1c24", "#ff7f27", "#fff200", "#22b14c", "#00a2e8", "#3f48cc", "#a349a4",
  "#ffffff", "#c3c3c3", "#b97a57", "#ffaec9", "#ffc90e", "#efe4b0", "#b5e61d", "#99d9ea", "#7092be", "#c8bfe7",
];
const toolNames = ["pencil", "bucket", "letter", "eraser", "dropper", "lens"];

const Big = ({ w, icon, iw, ih, label, second, ...rest }) => (
  <BigButton $w={w} {...rest}>
    <BigIcon $split={rest.$on && icon === "selection"}><Icon name={icon} w={iw} h={ih} /></BigIcon>
    <span>{label}</span>
    <span>{second || <Icon name="arrowDown" w={6} />}</span>
  </BigButton>
);
const Small = ({ icon, label, arrow, off }) => (
  <SmallButton $off={off}><Icon name={icon} w={16} />{label}{arrow && <Icon name="arrowDown" w={6} />}</SmallButton>
);

const Paint = ({ cropped, children }) => (
  <PaintWindow>
    <TitleBar>
      <Icon name="palette" w={16} />
      <TitleMark />
      <QuickAccess>
        <FlatButton $w={20} $h={20} aria-label="Salvar"><Icon name="save" w={13} /></FlatButton>
        <FlatButton $w={20} $h={20} aria-label="Desfazer"><Icon name="undo" w={14} /></FlatButton>
        <FlatButton $w={20} $h={20} aria-label="Refazer"><Icon name="redo" w={14} /></FlatButton>
        <FlatButton $w={20} $h={20} aria-label="Novo"><Icon name="page" w={15} /></FlatButton>
        <FlatButton $w={16} $h={20} $color="#333" aria-label="Personalizar"><Icon name="caretBar" w={10} /></FlatButton>
      </QuickAccess>
      <TitleMark />
      001.png - Paint
      {!cropped && (
        <WindowButtons>
          <FlatButton $w={46} $h={23} $color="#777" aria-label="Minimizar"><Icon name="minimize" w={15} /></FlatButton>
          <FlatButton $w={46} $h={23} $color="#777" aria-label="Restaurar"><Icon name="restore" w={13} /></FlatButton>
          <FlatButton $w={46} $h={23} $color="#777" aria-label="Fechar"><Icon name="close" w={14} /></FlatButton>
        </WindowButtons>
      )}
    </TitleBar>
    <RibbonTabs>
      <RibbonTab $w={56} $kind="file">Arquivo</RibbonTab>
      <RibbonTab $w={51} $kind="current">Início</RibbonTab>
      <RibbonTab $w={56}>Exibir</RibbonTab>
      {!cropped && <RibbonHelp><Icon name="chevUp" w={14} /><Icon name="help" w={16} /></RibbonHelp>}
    </RibbonTabs>
    <Ribbon>
      <Group $w={116}>
        <GroupBody $pad={4}>
          <Big w={42} icon={cropped ? "clipboardOff" : "clipboard"} iw={24} ih={30} label="Colar" />
          <Stack><Small icon="scissors" label="Recortar" off /><Small icon="copy" label="Copiar" off /></Stack>
        </GroupBody>
        <GroupName>Área de Transferência</GroupName>
      </Group>
      <Group $w={155}>
        <GroupBody $pad={3}>
          <Big w={53} icon="selection" iw={30} ih={22} label="Selecionar" $on />
          <Stack><Small icon="crop" label="Cortar" off /><Small icon="resize" label="Redimensionar" /><Small icon="rotate" label="Girar" arrow /></Stack>
        </GroupBody>
        <GroupName>Imagem</GroupName>
      </Group>
      <Group $w={76}>
        <GroupBody $center>
          <ToolGrid>{toolNames.map((n) => <FlatButton key={n} $w={22} $h={29} aria-label={n}><Icon name={n} w={18} /></FlatButton>)}</ToolGrid>
        </GroupBody>
        <GroupName>Ferramentas</GroupName>
      </Group>
      <Group $w={50}>
        <GroupBody $pad={2}><Big w={44} icon="brushes" iw={32} label="Pincéis" /></GroupBody>
      </Group>
      <Group $w={265}>
        <GroupBody $pad={5}>
          <Gallery>
            <ShapeGrid>
              {shapePaths.map((d, i) => <Shape key={d} viewBox="0 0 24 24"><path d={d} fill={i < 2 ? "none" : "#eef6fc"} stroke="#3f7fb5" strokeWidth="1.500" /></Shape>)}
            </ShapeGrid>
            {!cropped && (
              <GalleryScroll>
                <FlatButton $w={14} $h={19} $color="#aaa" aria-label="Anterior"><Icon name="arrowUp" w={7} /></FlatButton>
                <FlatButton $w={14} $h={19} aria-label="Próximo"><Icon name="arrowDown" w={7} /></FlatButton>
                <FlatButton $w={14} $h={19} aria-label="Mais formas"><Icon name="caretBar" w={9} /></FlatButton>
              </GalleryScroll>
            )}
          </Gallery>
          {!cropped && <Stack><Small icon="outline" label="Contorno" arrow off /><Small icon="fill" label="Preenchimento" arrow off /></Stack>}
        </GroupBody>
        {!cropped && <GroupName>Formas</GroupName>}
      </Group>
      {!cropped && (
        <>
          <Group $w={56}><GroupBody $center><Big w={50} icon="sizes" iw={32} ih={30} label="Tamanho" $off /></GroupBody></Group>
          <Group $w={348}>
            <GroupBody $pad={4}>
              <BigButton $w={39} $on><BigIcon><Swatch $s={30} $c="#000" /></BigIcon><span>Cor</span><span>1</span></BigButton>
              <BigButton $w={41}><BigIcon><Swatch $s={23} $c="#fff" /></BigIcon><span>Cor</span><span>2</span></BigButton>
              <Colors>
                {Array.from({ length: 30 }, (_, i) => <ColorCell key={i} $c={palette[i] || "#f5f6f7"} aria-label={palette[i] || "Cor personalizada"} />)}
              </Colors>
              <Big w={42} icon="spectrum" iw={29} label="Editar" second="cores" />
            </GroupBody>
            <GroupName>Cores</GroupName>
          </Group>
          <Group $w={64}><GroupBody $center><Big w={60} icon="paint3d" iw={31} label="Editar com" second="o Paint 3D" /></GroupBody></Group>
          <Group $w={56}><GroupBody $center><Big w={52} icon="alert" iw={31} label="Alerta de" second="produto" /></GroupBody></Group>
        </>
      )}
    </Ribbon>
    <Workspace>{children}</Workspace>
    <HScroll>
      <FlatButton $w={17} $h={16} aria-label="Rolar para a esquerda"><Icon name="chevLeft" w={10} /></FlatButton>
      <HThumb $full={cropped} />
      {!cropped && <WindowButtons><FlatButton $w={17} $h={16} aria-label="Rolar para a direita"><Icon name="chevRight" w={10} /></FlatButton></WindowButtons>}
    </HScroll>
    <Status>
      <StatusCell>{!cropped && <Icon name="move" w={16} />}</StatusCell>
      <StatusCell><Icon name="marquee" w={17} /></StatusCell>
      <StatusCell><Icon name="canvas" w={17} />3840 × 1080px</StatusCell>
      {!cropped && <StatusCell><Icon name="disk" w={16} />Tamanho: 748,1KB</StatusCell>}
      {!cropped && (
        <ZoomCell>
          100%
          <FlatButton $w={18} $h={20} aria-label="Reduzir"><Icon name="minusRound" w={17} /></FlatButton>
          <ZoomRange type="range" aria-label="Zoom" defaultValue="50" />
          <FlatButton $w={18} $h={20} aria-label="Ampliar"><Icon name="plusRound" w={17} /></FlatButton>
        </ZoomCell>
      )}
    </Status>
  </PaintWindow>
);

/* ------------------------------------------------------------------- app */

const Desktop = styled.div`
  display: flex;
  height: 100vh;
  overflow: hidden;
`;
const RightMonitor = styled.div`
  flex: 1;
  min-width: 0;
  display: flex;
`;

const full = { k: 1, level: 0 };
const reduced = { k: 0.8, level: 1 };
const smallest = { k: 0.64, level: 2 };

export default function App() {
  return (
    <ThemeProvider theme={full}>
      <GlobalStyle />
      <Desktop>
        <Screen $w="50%">
          <BrowserWindow />
          <Taskbar />
        </Screen>
        <RightMonitor>
          <Paint>
            <ThemeProvider theme={reduced}>
              <Snapshot $w="100%" $h="80vh">
                <Screen $w="40vw">
                  <BrowserWindow scrolled />
                  <Taskbar />
                </Screen>
                <Paint cropped>
                  <ThemeProvider theme={smallest}>
                    <Snapshot $w="32vw" $h="64vh">
                      <Screen $w="100%">
                        <BrowserWindow cropped />
                        <Taskbar cropped />
                      </Screen>
                    </Snapshot>
                  </ThemeProvider>
                </Paint>
              </Snapshot>
            </ThemeProvider>
          </Paint>
        </RightMonitor>
      </Desktop>
    </ThemeProvider>
  );
}
